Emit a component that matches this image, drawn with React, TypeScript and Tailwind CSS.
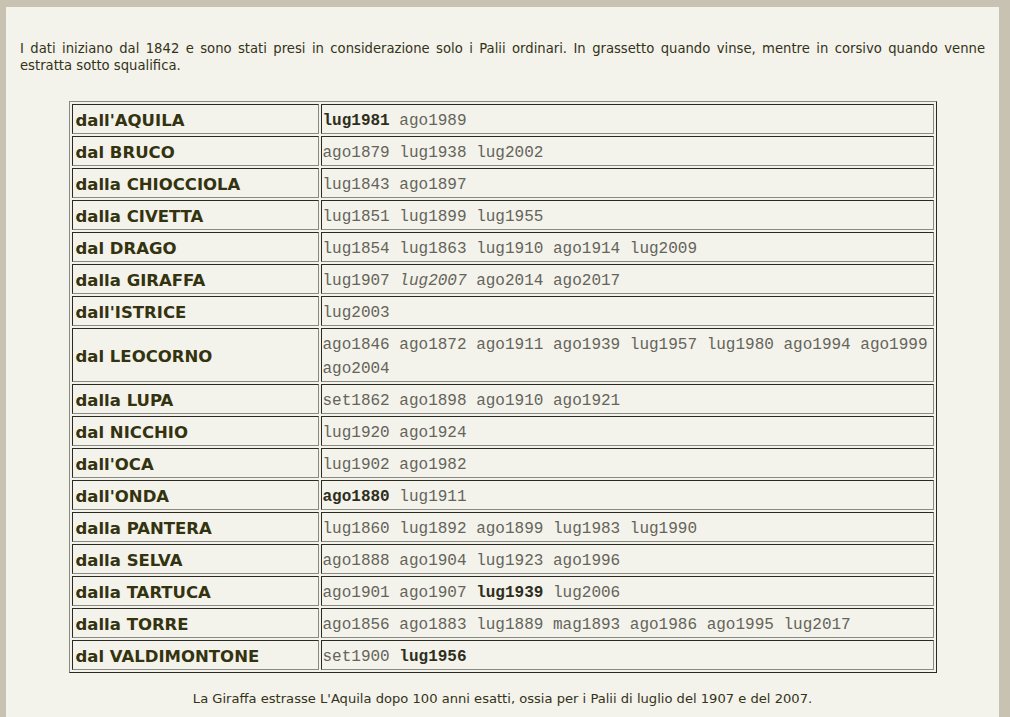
type Win = { t: string; b?: boolean; i?: boolean }

const rows: { name: string; wins: Win[] }[] = [
  { name: "dall'AQUILA", wins: [{ t: 'lug1981', b: true }, { t: 'ago1989' }] },
  { name: 'dal BRUCO', wins: [{ t: 'ago1879' }, { t: 'lug1938' }, { t: 'lug2002' }] },
  { name: 'dalla CHIOCCIOLA', wins: [{ t: 'lug1843' }, { t: 'ago1897' }] },
  { name: 'dalla CIVETTA', wins: [{ t: 'lug1851' }, { t: 'lug1899' }, { t: 'lug1955' }] },
  { name: 'dal DRAGO', wins: [{ t: 'lug1854' }, { t: 'lug1863' }, { t: 'lug1910' }, { t: 'ago1914' }, { t: 'lug2009' }] },
  { name: 'dalla GIRAFFA', wins: [{ t: 'lug1907' }, { t: 'lug2007', i: true }, { t: 'ago2014' }, { t: 'ago2017' }] },
  { name: "dall'ISTRICE", wins: [{ t: 'lug2003' }] },
  {
    name: 'dal LEOCORNO',
    wins: ['ago1846', 'ago1872', 'ago1911', 'ago1939', 'lug1957', 'lug1980', 'ago1994', 'ago1999', 'ago2004'].map(t => ({ t })),
  },
  { name: 'dalla LUPA', wins: [{ t: 'set1862' }, { t: 'ago1898' }, { t: 'ago1910' }, { t: 'ago1921' }] },
  { name: 'dal NICCHIO', wins: [{ t: 'lug1920' }, { t: 'ago1924' }] },
  { name: "dall'OCA", wins: [{ t: 'lug1902' }, { t: 'ago1982' }] },
  { name: "dall'ONDA", wins: [{ t: 'ago1880', b: true }, { t: 'lug1911' }] },
  { name: 'dalla PANTERA', wins: [{ t: 'lug1860' }, { t: 'lug1892' }, { t: 'ago1899' }, { t: 'lug1983' }, { t: 'lug1990' }] },
  { name: 'dalla SELVA', wins: [{ t: 'ago1888' }, { t: 'ago1904' }, { t: 'lug1923' }, { t: 'ago1996' }] },
  { name: 'dalla TARTUCA', wins: [{ t: 'ago1901' }, { t: 'ago1907' }, { t: 'lug1939', b: true }, { t: 'lug2006' }] },
  {
    name: 'dalla TORRE',
    wins: ['ago1856', 'ago1883', 'lug1889', 'mag1893', 'ago1986', 'ago1995', 'lug2017'].map(t => ({ t })),
  },
  { name: 'dal VALDIMONTONE', wins: [{ t: 'set1900' }, { t: 'lug1956', b: true }] },
]

const WinList = ({ wins }: { wins: Win[] }) => (
  <>
    {wins.map((w, idx) => (
      <span key={w.t + idx}>
        {idx > 0 && ' '}
        <span className={w.b ? 'font-bold text-[#2e2e1c]' : w.i ? 'italic' : ''}>{w.t}</span>
      </span>
    ))}
  </>
)

export default function App() {
  return (
    <div className="min-h-[717px] bg-[#c8c2b2] pl-[6px] pr-[11px] pt-[7px] font-['DejaVu_Sans',Verdana,sans-serif]">
      <div className="min-h-[710px] bg-[#f3f2eb] px-[14px] pt-[33px] pb-4 text-[#333318]">
        <p className="text-justify text-[13.2px] leading-[17px]">
          I dati iniziano dal 1842 e sono stati presi in considerazione solo i Palii ordinari. In grassetto quando
          vinse, mentre in corsivo quando venne estratta sotto squalifica.
        </p>

        <table className="mx-auto mt-[27px] w-[868px] border-separate border-spacing-[2px] border border-t-[#8a8a84] border-l-[#8a8a84] border-b-[#2a2a22] border-r-[#2a2a22]">
          <tbody>
            {rows.map(r => (
              <tr key={r.name}>
                <td className="w-[247px] border border-t-[#2a2a22] border-l-[#2a2a22] border-b-[#8a8a84] border-r-[#8a8a84] px-[3px] pt-[4px] pb-0 text-[16.5px] leading-[24px] font-bold text-[#333310]">
                  {r.name}
                </td>
                <td className="border border-t-[#2a2a22] border-l-[#2a2a22] border-b-[#8a8a84] border-r-[#8a8a84] px-[1px] pt-[4px] pb-0 font-['Liberation_Mono','Courier_New',monospace] text-[16px] leading-[24px] text-[#64645a]">
                  <WinList wins={r.wins} />
                </td>
              </tr>
            ))}
          </tbody>
        </table>

        <p className="mt-[17px] text-center text-[13.1px] leading-[17px]">
          La Giraffa estrasse L'Aquila dopo 100 anni esatti, ossia per i Palii di luglio del 1907 e del 2007.
        </p>
      </div>
    </div>
  )
}
